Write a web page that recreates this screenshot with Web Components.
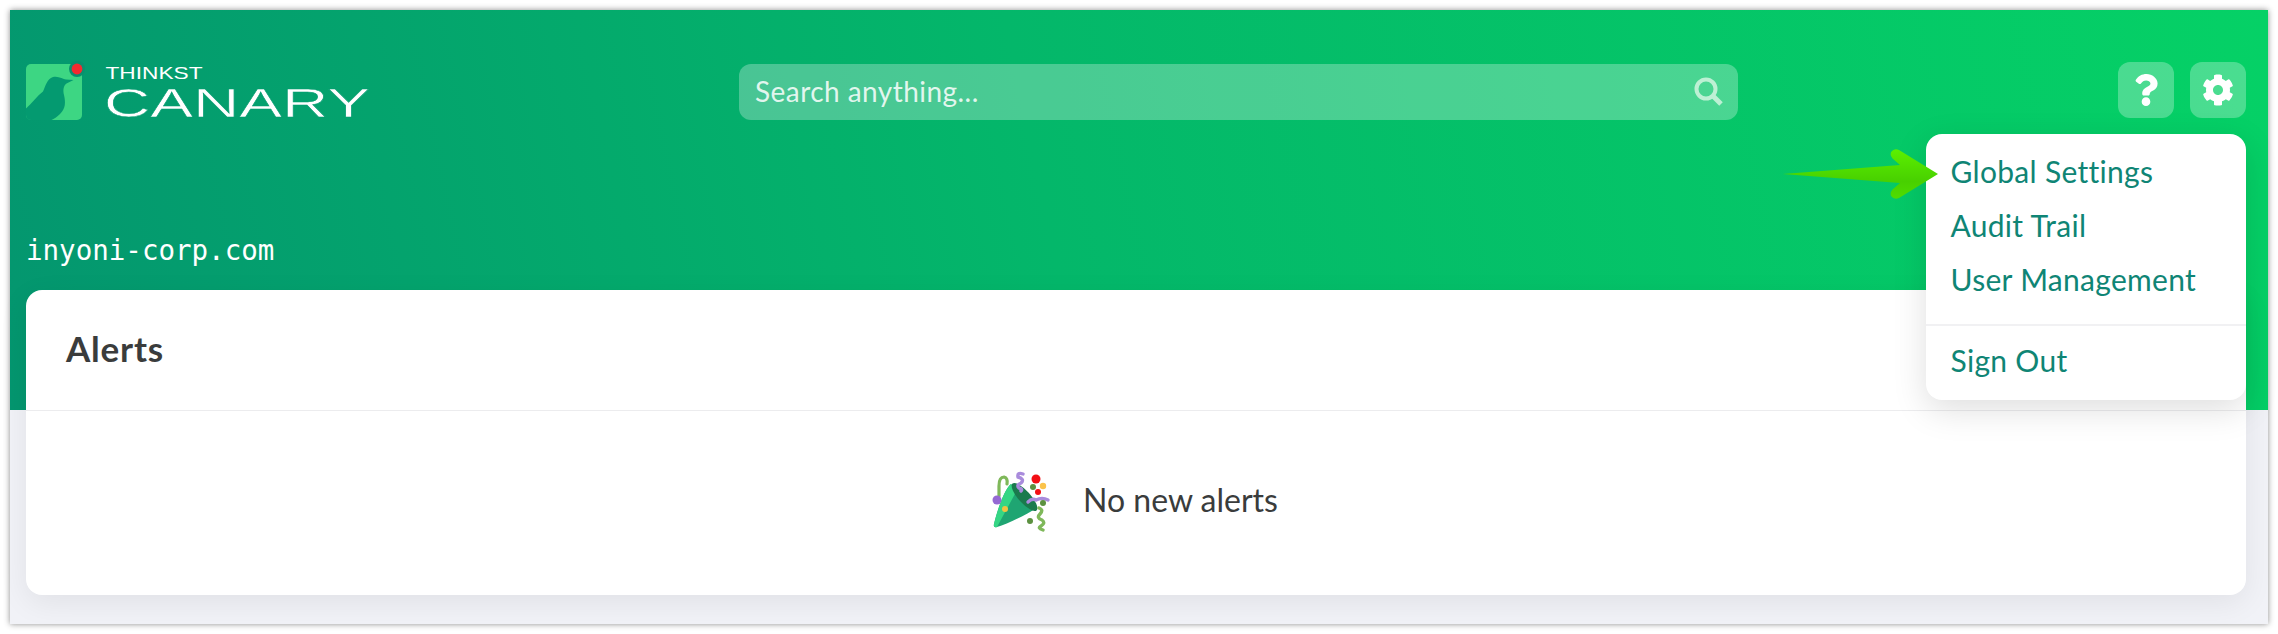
<!DOCTYPE html>
<html>
<head>
<meta charset="utf-8">
<title>Thinkst Canary</title>
<style>
  html, body { margin: 0; background: #fff; overflow: hidden; }
  body { font-family: Lato, "Noto Sans", sans-serif; }
</style>
</head>
<body>
<canary-window>
  <canary-topbar>
    <canary-logo></canary-logo>
    <canary-search placeholder="Search anything..."></canary-search>
    <div slot="actions" style="display:flex;gap:16px;margin-top:-4px">
      <icon-button>
        <svg width="24" height="32" viewBox="0 0 384 512" fill="#fff"><path d="M202.021 0C122.202 0 70.503 32.703 29.914 91.026c-7.363 10.58-5.093 25.086 5.178 32.874l43.138 32.709c10.373 7.865 25.132 6.026 33.253-4.148 25.049-31.381 43.63-49.449 82.757-49.449 30.764 0 68.816 19.799 68.816 49.631 0 22.552-18.617 34.134-48.993 51.164-35.423 19.86-82.299 44.576-82.299 106.405V320c0 13.255 10.745 24 24 24h72.471c13.255 0 24-10.745 24-24v-5.773c0-42.86 125.268-44.645 125.268-160.627C377.504 66.256 286.902 0 202.021 0zM192 373.459c-38.196 0-69.271 31.075-69.271 69.271 0 38.195 31.075 69.27 69.271 69.27s69.271-31.075 69.271-69.271-31.075-69.27-69.271-69.27z"/></svg>
      </icon-button>
      <icon-button>
        <svg width="32" height="32" viewBox="0 0 512 512" fill="#fff"><path d="M487.4 315.7l-42.6-24.6c4.3-23.2 4.3-47 0-70.2l42.6-24.6c4.9-2.8 7.1-8.6 5.5-14-11.1-35.6-30-67.8-54.7-94.6-3.8-4.1-10-5.1-14.8-2.3L380.8 110c-17.9-15.4-38.5-27.3-60.8-35.1V25.8c0-5.6-3.9-10.5-9.4-11.7-36.7-8.2-74.3-7.8-109.2 0-5.5 1.2-9.4 6.1-9.4 11.7V75c-22.2 7.9-42.8 19.8-60.8 35.1L88.7 85.5c-4.9-2.8-11-1.9-14.8 2.3-24.7 26.7-43.6 58.9-54.7 94.6-1.7 5.4.6 11.2 5.5 14L67.3 221c-4.3 23.2-4.3 47 0 70.2l-42.6 24.6c-4.9 2.8-7.1 8.6-5.5 14 11.1 35.6 30 67.8 54.7 94.6 3.8 4.1 10 5.1 14.8 2.3l42.6-24.6c17.9 15.4 38.5 27.3 60.8 35.1v49.2c0 5.6 3.9 10.5 9.4 11.7 36.7 8.2 74.3 7.8 109.2 0 5.5-1.2 9.4-6.1 9.4-11.7v-49.2c22.2-7.9 42.8-19.8 60.8-35.1l42.6 24.6c4.9 2.8 11 1.9 14.8-2.3 24.7-26.7 43.6-58.9 54.7-94.6 1.5-5.5-.7-11.3-5.6-14.1zM256 336c-44.1 0-80-35.9-80-80s35.9-80 80-80 80 35.9 80 80-35.9 80-80 80z"/></svg>
      </icon-button>
    </div>
    <settings-menu slot="actions">
      <menu-item>Global Settings</menu-item>
      <menu-item>Audit Trail</menu-item>
      <menu-item>User Management</menu-item>
      <menu-item slot="footer">Sign Out</menu-item>
    </settings-menu>
  </canary-topbar>
  <domain-label>inyoni-corp.com</domain-label>
  <alerts-card title-text="Alerts">No new alerts</alerts-card>
</canary-window>

<script>
class CanaryWindow extends HTMLElement {
  constructor() {
    super();
    this.attachShadow({ mode: "open" });
    this.shadowRoot.innerHTML = `
      <style>
        :host {
          display: block;
          box-sizing: border-box;
          margin: 10px;
          width: 2258px;
          height: 614px;
          padding: 54px 22px 0 16px;
          background:
            linear-gradient(78deg, #04966f 0%, #04b76a 46%, #05d166 100%) top / 100% 400px no-repeat,
            #f1f2f7;
          box-shadow: 0 0 6px rgba(0, 0, 0, .45);
        }
      </style>
      <slot></slot>`;
  }
}

class CanaryTopbar extends HTMLElement {
  constructor() {
    super();
    this.attachShadow({ mode: "open" });
    this.shadowRoot.innerHTML = `
      <style>
        :host {
          display: grid;
          grid-template-columns: 713px 999px 1fr;
          align-items: center;
          height: 56px;
          position: relative;
          z-index: 2;
        }
        .actions { justify-self: end; }
      </style>
      <slot></slot>
      <div class="actions"><slot name="actions"></slot></div>`;
  }
}

class CanaryLogo extends HTMLElement {
  constructor() {
    super();
    this.attachShadow({ mode: "open" });
    this.shadowRoot.innerHTML = `
      <style>
        :host { display: block; width: 350px; height: 56px; }
        svg { display: block; overflow: visible; }
        text { font-family: "Liberation Sans", sans-serif; fill: #fff; }
      </style>
      <svg width="350" height="56" viewBox="0 0 350 56">
        <rect width="56" height="56" rx="5" fill="#3dd683"/>
        <path d="M0 44.5C6 39 11 32 17 27.5 19.5 22 21 15 27 13 32 11.5 37 15 40 15.5L47.5 16 40.5 19.5C37 22 37 27 38 31 39.5 38 40 44 34 50 31 53 28 55 25.5 56H5Q0 56 0 51Z" fill="#049a70"/>
        <circle cx="51" cy="5" r="8" fill="#0a8f6f"/>
        <circle cx="51" cy="5" r="5.4" fill="#f52a2f"/>
        <text x="79.5" y="15" font-size="16.5" textLength="97" lengthAdjust="spacingAndGlyphs">THINKST</text>
        <text x="78" y="53.3" font-size="41" textLength="266" lengthAdjust="spacingAndGlyphs" stroke="#049c70" stroke-width=".5">CANARY</text>
      </svg>`;
  }
}

class CanarySearch extends HTMLElement {
  constructor() {
    super();
    this.attachShadow({ mode: "open" });
    this.shadowRoot.innerHTML = `
      <style>
        :host {
          display: flex;
          align-items: center;
          justify-content: space-between;
          height: 56px;
          padding: 0 13px 0 16px;
          box-sizing: border-box;
          background: rgba(255, 255, 255, .28);
          border-radius: 12px;
          color: rgba(255, 255, 255, .85);
          font: 400 28px Lato, sans-serif;
          letter-spacing: .45px;
        }
        span { margin-top: -2px; }
      </style>
      <span></span>
      <svg width="32" height="32" viewBox="0 0 32 32" fill="none" stroke="#bdf0d4">
        <circle cx="13" cy="13" r="9.5" stroke-width="4"/>
        <path d="M20.5 20.5L28 28" stroke-width="5"/>
      </svg>`;
    this.shadowRoot.querySelector("span").textContent = this.getAttribute("placeholder");
  }
}

class IconButton extends HTMLElement {
  constructor() {
    super();
    this.attachShadow({ mode: "open" });
    this.shadowRoot.innerHTML = `
      <style>
        :host {
          display: flex;
          align-items: center;
          justify-content: center;
          width: 56px;
          height: 56px;
          background: rgba(255, 255, 255, .28);
          border-radius: 12px;
        }
      </style>
      <slot></slot>`;
  }
}

class SettingsMenu extends HTMLElement {
  constructor() {
    super();
    this.attachShadow({ mode: "open" });
    this.shadowRoot.innerHTML = `
      <style>
        :host {
          display: block;
          position: absolute;
          top: 70px;
          right: 0;
          width: 320px;
          height: 266px;
          box-sizing: border-box;
          padding: 10px 0 14px;
          background: #fff;
          border-radius: 16px;
          box-shadow: 0 10px 34px rgba(0, 0, 0, .13);
        }
        .rule { margin: 18px 0 7px; border-top: 2px solid #f1f1f3; }
        .arrow { position: absolute; left: -146px; top: 11px; }
      </style>
      <slot></slot>
      <div class="rule"></div>
      <slot name="footer"></slot>
      <svg class="arrow" width="160" height="60" viewBox="0 0 160 60">
        <defs>
          <linearGradient id="g" x1="0" y1="0" x2="0" y2="1">
            <stop offset="0" stop-color="#5cf000"/>
            <stop offset=".65" stop-color="#48d000"/>
            <stop offset="1" stop-color="#50dc00"/>
          </linearGradient>
        </defs>
        <path d="M2.7 29L120 20 112.5 13.5Q109 9 112 6 115 3 119 5L158 29 119 53Q115 55 112 52 109 49 112.5 44.5L120 38Z" fill="url(#g)"/>
      </svg>`;
  }
}

class MenuItem extends HTMLElement {
  constructor() {
    super();
    this.attachShadow({ mode: "open" });
    this.shadowRoot.innerHTML = `
      <style>
        :host {
          display: block;
          padding-left: 24.5px;
          font: 400 30px/54px Lato, sans-serif;
          letter-spacing: .3px;
          color: #0f8575;
        }
      </style>
      <slot></slot>`;
  }
}

class DomainLabel extends HTMLElement {
  constructor() {
    super();
    this.attachShadow({ mode: "open" });
    this.shadowRoot.innerHTML = `
      <style>
        :host {
          display: block;
          margin: 112px 0 22px;
          font: 400 27.5px/36px "DejaVu Sans Mono", monospace;
          color: #fff;
        }
      </style>
      <slot></slot>`;
  }
}

class PartyPopper extends HTMLElement {
  constructor() {
    super();
    this.attachShadow({ mode: "open" });
    this.shadowRoot.innerHTML = `
      <style>:host { display: block; width: 70px; height: 70px; }</style>
      <svg width="70" height="70" viewBox="0 0 70 70" fill="none">
        <path d="M27 20C21 24 13 47 10 60Q9 64 13 63C24 60 43 50 53 44Z" fill="#1fa572"/>
        <path d="M27 20C21 24 13 47 10 60Q9 64 13 63L32 28Z" fill="#35d684"/>
        <ellipse cx="40.5" cy="33" rx="6" ry="18" transform="rotate(-42 40.5 33)" fill="#1a7a4d"/>
        <path d="M15 32V22Q15 13 20 13 24 14 23 20" stroke="#7fb85a" stroke-width="3.2" stroke-linecap="round"/>
        <path d="M39 10Q33 8 34 13 41 15 37 19 32 21 35 24 39 25 37 27" stroke="#a98bdc" stroke-width="3.4" stroke-linecap="round"/>
        <path d="M44 38Q48 34 52 36 58 33 64 36" stroke="#a98bdc" stroke-width="3.4" stroke-linecap="round"/>
        <path d="M55 44Q60 46 56 50 52 54 58 56 62 59 57 62 53 64 59 66" stroke="#7fb85a" stroke-width="3.4" stroke-linecap="round"/>
        <circle cx="13" cy="36" r="4.5" fill="#9569d3"/>
        <circle cx="52" cy="15" r="4.5" fill="#f30f14"/>
        <circle cx="59" cy="22" r="3.2" fill="#fbc34a"/>
        <circle cx="54" cy="28" r="3" fill="#f30f14"/>
        <circle cx="49" cy="23" r="3" fill="#5c9140"/>
        <circle cx="59" cy="39" r="3" fill="#5c9140"/>
        <circle cx="46" cy="57" r="3" fill="#5c9140"/>
        <circle cx="21" cy="45" r="3" fill="#f2c340"/>
      </svg>`;
  }
}

class AlertsCard extends HTMLElement {
  constructor() {
    super();
    this.attachShadow({ mode: "open" });
    this.shadowRoot.innerHTML = `
      <style>
        :host {
          display: block;
          height: 305px;
          background: #fff;
          border-radius: 16px;
          box-shadow: 0 8px 30px rgba(0, 0, 0, .07);
          color: #3a3c3c;
          position: relative;
          z-index: 1;
        }
        header {
          box-sizing: border-box;
          height: 121px;
          padding: 0 0 5px 40px;
          display: flex;
          align-items: center;
          border-bottom: 1px solid #ececee;
          font: 700 35px Lato, sans-serif;
          letter-spacing: .8px;
        }
        .empty {
          box-sizing: border-box;
          height: 184px;
          padding: 0 10px 8px 0;
          display: flex;
          align-items: center;
          justify-content: center;
          gap: 29px;
          font: 400 32px Lato, sans-serif;
        }
      </style>
      <header></header>
      <div class="empty"><party-popper></party-popper><span><slot></slot></span></div>`;
    this.shadowRoot.querySelector("header").textContent = this.getAttribute("title-text");
  }
}

customElements.define("canary-window", CanaryWindow);
customElements.define("canary-topbar", CanaryTopbar);
customElements.define("canary-logo", CanaryLogo);
customElements.define("canary-search", CanarySearch);
customElements.define("icon-button", IconButton);
customElements.define("settings-menu", SettingsMenu);
customElements.define("menu-item", MenuItem);
customElements.define("domain-label", DomainLabel);
customElements.define("party-popper", PartyPopper);
customElements.define("alerts-card", AlertsCard);
</script>
</body>
</html>
